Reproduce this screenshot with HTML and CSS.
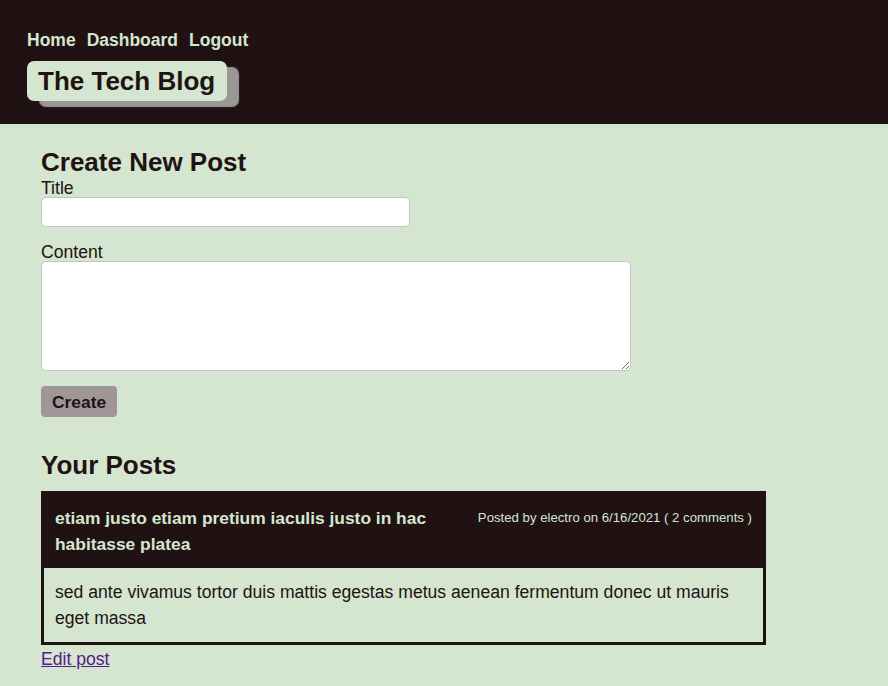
FILE: index.html
```html
<!DOCTYPE html>
<html>
<head>
<meta charset="utf-8">
<title>The Tech Blog</title>
<link rel="stylesheet" href="styles.css">
</head>
<body>
<header class="site-header">
  <nav class="nav">
    <a href="#" class="nav-link">Home</a>
    <a href="#" class="nav-link">Dashboard</a>
    <a href="#" class="nav-link">Logout</a>
  </nav>
  <h1 class="logo">The Tech Blog</h1>
</header>
<main class="main">
  <h2 class="section-title first">Create New Post</h2>
  <form class="post-form">
    <label class="label" for="title">Title</label>
    <input class="input" id="title" type="text">
    <label class="label label-gap" for="content">Content</label>
    <textarea class="textarea" id="content"></textarea>
    <button class="btn" type="button">Create</button>
  </form>
  <h2 class="section-title posts-title">Your Posts</h2>
  <article class="post">
    <div class="post-head">
      <div class="post-title">etiam justo etiam pretium iaculis justo in hac habitasse platea</div>
      <div class="post-meta">Posted by electro on 6/16/2021 ( 2 comments )</div>
    </div>
    <div class="post-body">sed ante vivamus tortor duis mattis egestas metus aenean fermentum donec ut mauris eget massa</div>
  </article>
  <a href="#" class="edit-link">Edit post</a>
</main>
</body>
</html>
```
FILE: styles.css
```css
html, body {
  margin: 0;
  padding: 0;
}
body {
  background: #d4e6cf;
  color: #211314;
  font-family: "Liberation Sans", Arial, sans-serif;
  font-size: 17.6px;
  min-height: 686px;
}
.site-header {
  background: #201213;
  padding: 30px 27px 23px;
  display: flex;
  flex-direction: column;
  align-items: flex-start;
}
.nav {
  display: flex;
  gap: 11px;
}
.nav-link {
  color: #d4e6cf;
  font-weight: bold;
  font-size: 17.5px;
  text-decoration: none;
  line-height: 21px;
}
.logo {
  margin: 10px 0 0;
  background: #d4e6cf;
  color: #211314;
  font-size: 26px;
  line-height: 32px;
  padding: 4px 12px 4px 11px;
  border-radius: 7px;
  box-shadow: 12px 6px 1px #9b9797;
}
.main {
  padding: 0 41px 20px;
}
.section-title {
  font-size: 26px;
  line-height: 30px;
  margin: 0;
}
.section-title.first {
  margin-top: 23px;
  margin-bottom: 2px;
}
.post-form {
  display: flex;
  flex-direction: column;
  align-items: flex-start;
}
.label {
  line-height: 18px;
}
.label-gap {
  margin-top: 16px;
}
.input {
  box-sizing: border-box;
  width: 369px;
  height: 30px;
  border: 1px solid #c3c3c3;
  border-radius: 5px;
  background: #fff;
}
.textarea {
  box-sizing: border-box;
  width: 590px;
  height: 110px;
  border: 1px solid #c3c3c3;
  border-radius: 5px;
  background: #fff;
}
.btn {
  margin-top: 15px;
  background: #a09697;
  color: #211314;
  border: none;
  border-radius: 4px;
  font-family: "Liberation Sans", Arial, sans-serif;
  font-weight: bold;
  font-size: 17.4px;
  line-height: 20px;
  padding: 6px 11px 5px 11px;
}
.posts-title {
  margin-top: 33px;
  margin-bottom: 11px;
}
.post {
  width: 725px;
  box-sizing: border-box;
  border: 3px solid #201213;
}
.post-head {
  background: #201213;
  color: #d4e6cf;
  display: flex;
  justify-content: space-between;
  align-items: flex-start;
  gap: 20px;
  padding: 11px 11px 11px 11px;
}
.post-title {
  font-weight: bold;
  font-size: 17.4px;
  line-height: 26px;
}
.post-meta {
  flex-shrink: 0;
  font-size: 13.2px;
  line-height: 26px;
}
.post-body {
  padding: 11px;
  line-height: 26px;
}
.edit-link {
  display: inline-block;
  color: #551a8b;
  line-height: 28px;
}
```
